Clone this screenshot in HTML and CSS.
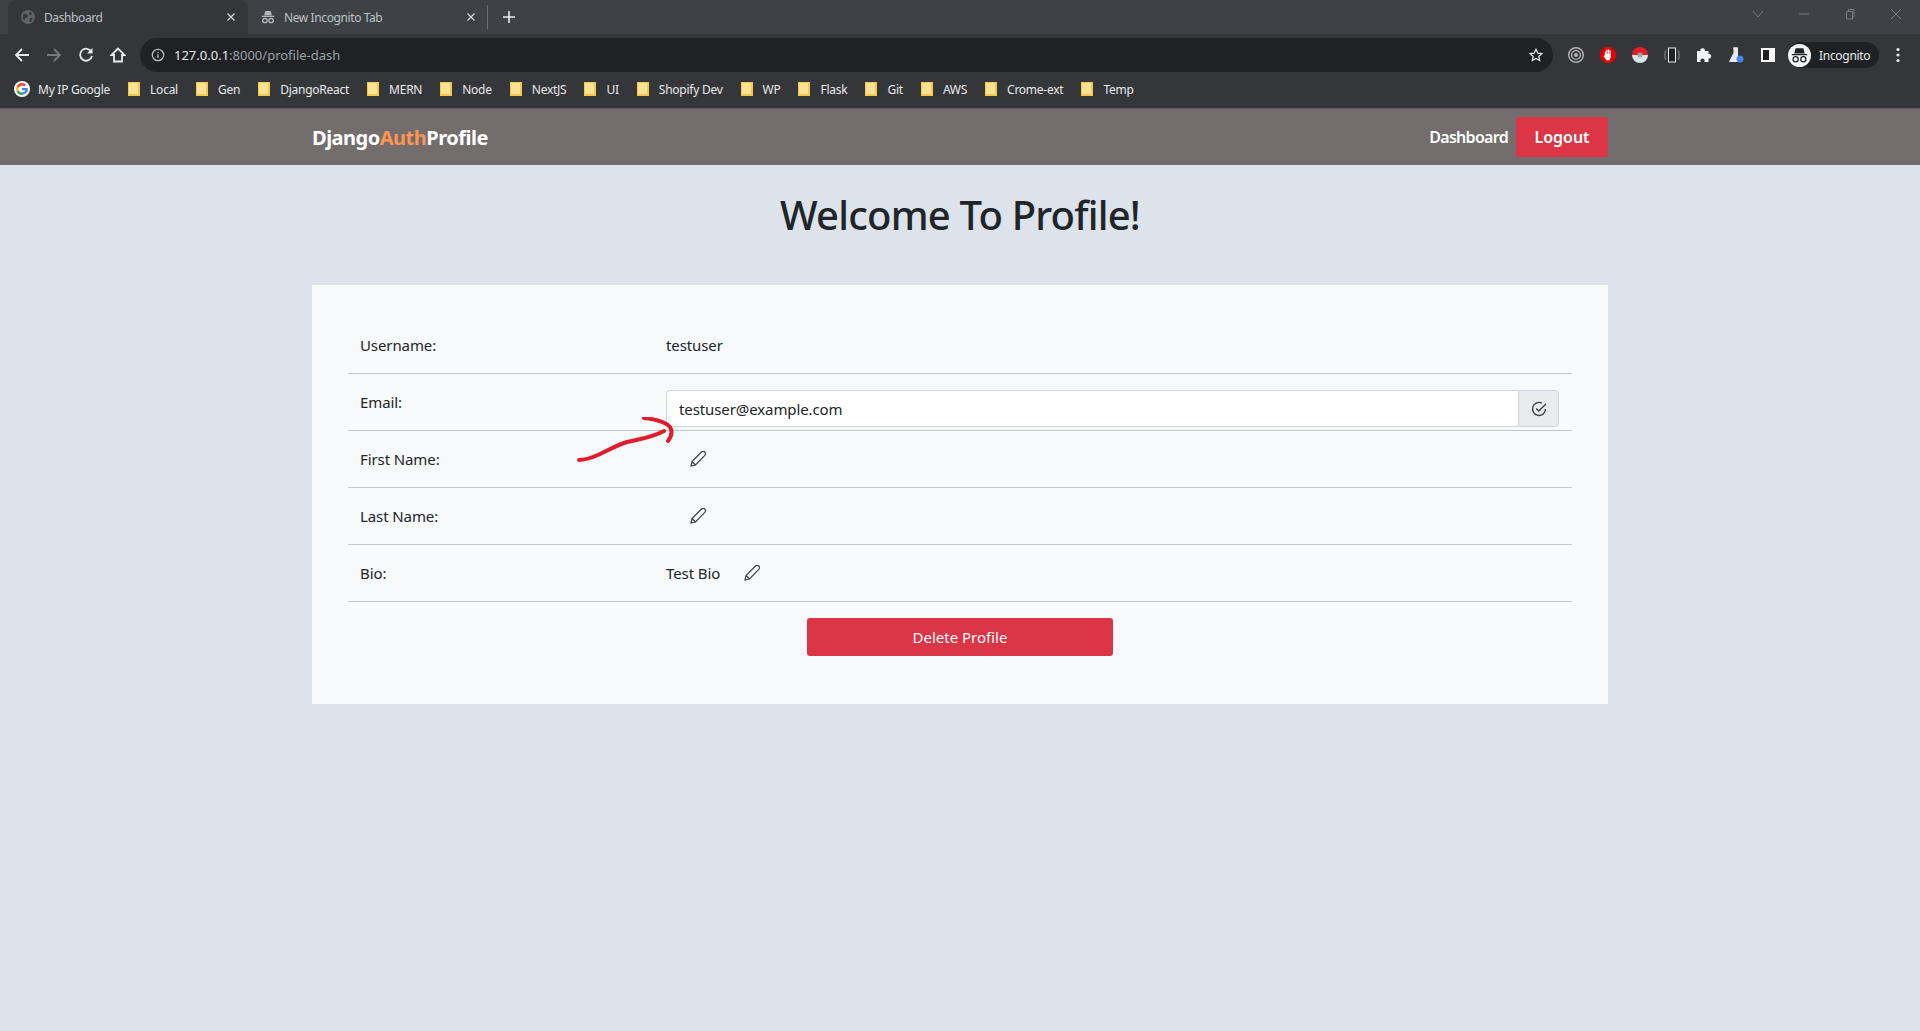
FILE: index.html
```html
<!DOCTYPE html>
<html lang="en">
<head>
    <meta charset="UTF-8">
    <title>Dashboard</title>
    <link rel="stylesheet" href="styles.css">
</head>
<body>
    <div class="chrome">
        <div class="tabstrip">
            <div class="tab tab-active">
                <svg class="tab-icon" viewBox="0 0 16 16"><circle cx="8" cy="8" r="8" fill="#5f6368"/><path d="M3 4l4 1 1 3-3 1-1 3-2-3zM10 2l3 2-2 2-2-1zM10 9l3 0-1 4-2 1z" fill="#35363a"/></svg>
                <span class="tab-title">Dashboard</span>
                <svg class="tab-close" viewBox="0 0 8 8"><path d="M.5.5l7 7M7.500.5l-7 7" stroke="#d5d7da" stroke-width="1.200"/></svg>
            </div>
            <div class="tab">
                <svg class="tab-icon" viewBox="0 0 16 16"><path d="M5 1h6l1.500 5h-9zM1 6.500h14V8H1z" fill="#b4b8bc"/><circle cx="4.500" cy="12" r="2.500" fill="none" stroke="#b4b8bc" stroke-width="1.500"/><circle cx="11.500" cy="12" r="2.500" fill="none" stroke="#b4b8bc" stroke-width="1.500"/></svg>
                <span class="tab-title">New Incognito Tab</span>
                <svg class="tab-close" viewBox="0 0 8 8"><path d="M.5.5l7 7M7.500.5l-7 7" stroke="#d5d7da" stroke-width="1.200"/></svg>
            </div>
            <div class="tab-sep"></div>
            <svg class="new-tab" viewBox="0 0 12 12"><path d="M6 0v12M0 6h12" stroke="#e8eaed" stroke-width="1.600"/></svg>
            <div class="window-btns">
                <svg viewBox="0 0 12 12"><path d="M1 3l5 6 5-6" fill="none" stroke="#777b80"/></svg>
                <svg viewBox="0 0 12 12"><path d="M1 6h10" stroke="#777b80"/></svg>
                <svg viewBox="0 0 12 12"><path d="M2.500 3.500h6v7.500h-6zM4.500 3.500v-2h5.500v7.500h-1.500" fill="none" stroke="#777b80"/></svg>
                <svg viewBox="0 0 12 12"><path d="M1 1l10 10M11 1l-10 10" stroke="#777b80"/></svg>
            </div>
        </div>
        <div class="toolbar">
            <div class="nav-btns">
                <svg viewBox="0 0 16 16"><path d="M15 8H2M8 2L2 8l6 6" fill="none" stroke="#e8eaed" stroke-width="1.800"/></svg>
                <svg viewBox="0 0 16 16"><path d="M1 8h13M8 2l6 6-6 6" fill="none" stroke="#77797d" stroke-width="1.800"/></svg>
                <svg viewBox="0 0 16 16"><path d="M13.500 5A6 6 0 1 0 14 9" fill="none" stroke="#e8eaed" stroke-width="1.800"/><path d="M14.500 1v5.500H9z" fill="#e8eaed"/></svg>
                <svg viewBox="0 0 16 16"><path d="M8 1.500L1.500 8H4v6.500h8V8h2.500z" fill="none" stroke="#e8eaed" stroke-width="1.800"/></svg>
            </div>
            <div class="omnibox">
                <svg class="info-icon" viewBox="0 0 16 16"><circle cx="8" cy="8" r="6.500" fill="none" stroke="#bdc1c6" stroke-width="1.400"/><path d="M8 7v4.500M8 4.500v1.300" stroke="#bdc1c6" stroke-width="1.400"/></svg>
                <span class="url"><span class="url-host">127.0.0.1</span>:8000/profile-dash</span>
                <svg class="star-icon" viewBox="0 0 16 16"><path d="M8 1.500l2 4.400 4.700.5-3.500 3.200 1 4.700L8 11.900l-4.200 2.400 1-4.700-3.500-3.200 4.700-.5z" fill="none" stroke="#dadce0" stroke-width="1.500"/></svg>
            </div>
            <div class="extensions">
                <svg viewBox="0 0 16 16"><circle cx="8" cy="8" r="7.300" fill="none" stroke="#b5b5b5" stroke-width="1.400"/><circle cx="8" cy="8" r="4.400" fill="none" stroke="#b5b5b5" stroke-width="1.400"/><circle cx="8" cy="8" r="2" fill="#b5b5b5"/></svg>
                <svg viewBox="0 0 16 16"><path d="M5 0h6l5 5v6l-5 5H5l-5-5V5z" fill="#e60000"/><path d="M4.800 8V4.500h1.100V7h.4V2.800h1.200V7h.4V2.500h1.200V7h.4V3.200h1.200V10l-1 3.200H6.500L3.500 9.300l.8-.8z" fill="#fff"/></svg>
                <svg viewBox="0 0 16 16"><path d="M0 8a8 8 0 0 1 16 0z" fill="#e41e26"/><path d="M0 8a8 8 0 0 0 16 0z" fill="#d8e4e8"/><circle cx="8" cy="8" r="2.500" fill="#9aa5a8"/></svg>
                <svg viewBox="0 0 16 16"><rect x="4.500" y="1" width="7" height="14" fill="#202124" stroke="#e8eaed"/><path d="M2.500 4H1v8h1.500M13.500 4H15v8h-1.500" fill="none" stroke="#80848a"/></svg>
                <svg viewBox="0 0 16 16"><path d="M1 4h3.500a2.200 2.200 0 1 1 4.300 0h3.700v3.200a2.200 2.200 0 1 1 0 4.300V15H8.300a2.200 2.200 0 1 0-3.600 0H1z" fill="#f1f3f4"/></svg>
                <svg viewBox="0 0 16 16"><path d="M5 1h5M6 1v5l-4.500 8.500h8L9.500 6V1z" fill="#e8eaed" stroke="#e8eaed"/><circle cx="12" cy="12" r="3.500" fill="#4285f4"/></svg>
                <svg viewBox="0 0 16 16"><path d="M1 1h14v14H1z" fill="#fff"/><path d="M3 3h6v10H3z" fill="#202124"/></svg>
            </div>
            <div class="profile-pill">
                <svg viewBox="0 0 24 24"><circle cx="12" cy="12" r="12" fill="#f1f3f4"/><path d="M8 4.500h8l1.500 5.500h-11zM4 10.500h16v1.300H4z" fill="#202124"/><circle cx="8" cy="16" r="2.700" fill="none" stroke="#202124" stroke-width="1.300"/><circle cx="16" cy="16" r="2.700" fill="none" stroke="#202124" stroke-width="1.300"/></svg>
                <span>Incognito</span>
            </div>
            <svg class="menu-dots" viewBox="0 0 4 16"><circle cx="2" cy="2.500" r="1.600" fill="#e8eaed"/><circle cx="2" cy="8" r="1.600" fill="#e8eaed"/><circle cx="2" cy="13.500" r="1.600" fill="#e8eaed"/></svg>
        </div>
        <div class="bookmarks">
            <a class="bookmark">
                <svg class="g-logo" viewBox="0 0 16 16"><circle cx="8" cy="8" r="8" fill="#fff"/><path d="M8 7v2.200h3.300a3.400 3.400 0 0 1-3.300 2.300V14a6 6 0 0 0 5.800-7z" fill="#4285f4"/><path d="M8 11.500a3.500 3.500 0 0 1-3.300-2.300l-2 1.500A6 6 0 0 0 8 14z" fill="#34a853"/><path d="M4.700 9.200a3.500 3.500 0 0 1 0-2.400l-2-1.500a6 6 0 0 0 0 5.400z" fill="#fbbc05"/><path d="M4.700 6.800A3.500 3.500 0 0 1 10.300 5.400l1.800-1.800A6 6 0 0 0 2.700 5.300z" fill="#ea4335"/></svg>
                My IP Google
            </a>
            <a class="bookmark"><span class="folder"></span>Local</a>
            <a class="bookmark"><span class="folder"></span>Gen</a>
            <a class="bookmark"><span class="folder"></span>DjangoReact</a>
            <a class="bookmark"><span class="folder"></span>MERN</a>
            <a class="bookmark"><span class="folder"></span>Node</a>
            <a class="bookmark"><span class="folder"></span>NextJS</a>
            <a class="bookmark"><span class="folder"></span>UI</a>
            <a class="bookmark"><span class="folder"></span>Shopify Dev</a>
            <a class="bookmark"><span class="folder"></span>WP</a>
            <a class="bookmark"><span class="folder"></span>Flask</a>
            <a class="bookmark"><span class="folder"></span>Git</a>
            <a class="bookmark"><span class="folder"></span>AWS</a>
            <a class="bookmark"><span class="folder"></span>Crome-ext</a>
            <a class="bookmark"><span class="folder"></span>Temp</a>
        </div>
    </div>

    <nav class="navbar">
        <a class="brand">Django<span class="brand-accent">Auth</span>Profile</a>
        <div class="nav-links">
            <a class="nav-link">Dashboard</a>
            <a class="btn-logout">Logout</a>
        </div>
    </nav>

    <main class="container">
        <h1 class="page-title">Welcome To Profile!</h1>
        <section class="profile-card">
            <div class="profile-row">
                <div class="profile-label">Username:</div>
                <div class="profile-value">testuser</div>
            </div>
            <div class="profile-row">
                <div class="profile-label">Email:</div>
                <div class="input-group">
                    <input class="email-input" type="text" value="testuser@example.com">
                    <span class="input-addon">
                        <svg class="icon" viewBox="0 0 16 16"><path d="M14.500 8A6.500 6.500 0 1 1 11 2.200" fill="none" stroke="currentColor" stroke-width="1.300"/><path d="M5.200 7.500l2.500 2.500L15 3" fill="none" stroke="currentColor" stroke-width="1.300"/></svg>
                    </span>
                </div>
            </div>
            <div class="profile-row">
                <div class="profile-label">First Name:</div>
                <div class="profile-value"><button class="edit-btn"><svg class="icon" viewBox="0 0 16 16"><path d="M1 15l1-4.500L11.500 1c1-1 2.500-.8 3.300 0s1 2.300 0 3.300L5.500 14zM2 10.500l3.500 3.500" fill="none" stroke="currentColor" stroke-width="1.200"/></svg></button></div>
            </div>
            <div class="profile-row">
                <div class="profile-label">Last Name:</div>
                <div class="profile-value"><button class="edit-btn"><svg class="icon" viewBox="0 0 16 16"><path d="M1 15l1-4.500L11.500 1c1-1 2.500-.8 3.300 0s1 2.300 0 3.300L5.500 14zM2 10.500l3.500 3.500" fill="none" stroke="currentColor" stroke-width="1.200"/></svg></button></div>
            </div>
            <div class="profile-row">
                <div class="profile-label">Bio:</div>
                <div class="profile-value">Test Bio<button class="edit-btn"><svg class="icon" viewBox="0 0 16 16"><path d="M1 15l1-4.500L11.500 1c1-1 2.500-.8 3.300 0s1 2.300 0 3.300L5.500 14zM2 10.500l3.500 3.500" fill="none" stroke="currentColor" stroke-width="1.200"/></svg></button></div>
            </div>
            <div class="delete-wrap">
                <button class="btn-delete">Delete Profile</button>
            </div>
        </section>
    </main>

    <svg class="scribble" width="120" height="60" viewBox="0 0 120 60">
        <path d="M2 43C8 43 14 41 21 38C32 33 40 28 50 25C62 22 74 21 87 14M67 1C76 2 88 4 93 10C96 15 94 20 91 24" fill="none" stroke="#e21c2a" stroke-width="4" stroke-linecap="round"/>
    </svg>
</body>
</html>
```

FILE: styles.css
```css
* {
    box-sizing: border-box;
}
body {
    margin: 0;
    min-height: 1031px;
    font-family: "Noto Sans", "Open Sans", sans-serif;
    color: #212529;
    background-color: #dce3ea;
}

/* browser frame */
.chrome {
    color: #e8eaed;
    background-color: #35363a;
}
.tabstrip {
    display: flex;
    align-items: center;
    height: 34px;
    padding-left: 8px;
    background-color: #3e4145;
}
.tab {
    display: flex;
    align-items: center;
    width: 240px;
    height: 34px;
    padding: 0 13px;
    font-size: 12px;
    letter-spacing: -0.4px;
    color: #bdc1c6;
}
.tab-active {
    border-radius: 8px 8px 0 0;
    background-color: #35363a;
}
.tab-icon {
    width: 14px;
    height: 14px;
    margin-right: 9px;
}
.tab-title {
    flex: 1;
}
.tab-close {
    width: 8px;
    height: 8px;
}
.tab-sep {
    width: 1px;
    height: 24px;
    margin-left: -1px;
    background-color: #6b6e72;
}
.new-tab {
    width: 12px;
    height: 12px;
    margin-left: 15px;
}
.window-btns {
    display: flex;
    gap: 34px;
    margin-left: auto;
    padding-right: 18px;
    padding-bottom: 6px;
}
.window-btns svg {
    width: 12px;
    height: 12px;
}
.toolbar {
    display: flex;
    align-items: center;
    height: 38px;
    padding-top: 4px;
}
.nav-btns {
    display: flex;
    gap: 16px;
    padding-left: 14px;
}
.nav-btns svg {
    width: 16px;
    height: 16px;
}
.omnibox {
    display: flex;
    align-items: center;
    width: 1413px;
    height: 34px;
    margin-left: 14px;
    padding: 0 10px 0 11px;
    border-radius: 17px;
    background-color: #202124;
    font-size: 13px;
}
.info-icon {
    width: 14px;
    height: 14px;
    margin-right: 9px;
}
.url {
    flex: 1;
    color: #9aa0a6;
}
.url-host {
    color: #e8eaed;
}
.star-icon {
    width: 14px;
    height: 14px;
}
.extensions {
    display: flex;
    gap: 16px;
    margin-left: 15px;
}
.extensions svg {
    width: 16px;
    height: 16px;
}
.profile-pill {
    display: flex;
    align-items: center;
    width: 91px;
    height: 26px;
    margin-left: 12px;
    border-radius: 13px;
    background-color: #202124;
    font-size: 12px;
    letter-spacing: -0.3px;
}
.profile-pill svg {
    width: 23px;
    height: 23px;
    margin-right: 8px;
}
.menu-dots {
    width: 4px;
    height: 16px;
    margin-left: 17px;
}
.bookmarks {
    display: flex;
    align-items: center;
    gap: 18px;
    height: 37px;
    padding: 0 0 2px 14px;
    border-bottom: 1px solid #5a5a5c;
    font-size: 12px;
    letter-spacing: -0.25px;
}
.bookmark {
    display: flex;
    align-items: center;
    gap: 10px;
}
.g-logo {
    width: 16px;
    height: 16px;
    margin-right: -2px;
}
.folder {
    width: 12px;
    height: 14px;
    border: 1px solid #f2c94c;
    border-right-width: 2px;
    border-bottom-width: 2px;
    background-color: #fde293;
}

/* site navbar */
.navbar {
    display: flex;
    align-items: center;
    justify-content: space-between;
    height: 56px;
    padding: 0 312px;
    background-color: #736d6d;
}
.brand {
    font-size: 20px;
    font-weight: 700;
    letter-spacing: -0.5px;
    color: #fff;
}
.brand-accent {
    color: #fd9650;
}
.nav-links {
    display: flex;
    align-items: center;
    gap: 8px;
}
.nav-link {
    font-size: 16px;
    font-weight: 600;
    letter-spacing: -0.7px;
    color: #fff;
}
.btn-logout {
    display: flex;
    align-items: center;
    justify-content: center;
    width: 92px;
    height: 40px;
    border-radius: 2px;
    background-color: #dc3545;
    font-weight: 600;
    color: #fff;
}

/* profile */
.container {
    width: 1296px;
    margin: 0 auto;
}
.page-title {
    margin: 0;
    padding: 22px 0 42px;
    font-size: 40px;
    font-weight: 500;
    line-height: 56px;
    letter-spacing: -0.8px;
    text-align: center;
}
.profile-card {
    height: 419px;
    padding: 32px 36px;
    background-color: #f8f9fa;
}
.profile-row {
    display: grid;
    grid-template-columns: 306px 1fr;
    height: 57px;
    padding: 16px 13px 0 12px;
    border-bottom: 1px solid #c4c6c9;
    font-size: 15px;
    line-height: 24px;
    letter-spacing: -0.1px;
}
.profile-value {
    display: flex;
    align-items: center;
    height: 24px;
}
.edit-btn {
    display: flex;
    padding: 0;
    margin-left: 24px;
    border: 0;
    background: none;
    color: #33373b;
}
.icon {
    width: 16px;
    height: 16px;
    color: #3c4045;
}
.input-group {
    display: flex;
    height: 37px;
}
.email-input {
    flex: 1;
    padding: 0 12px;
    border: 1px solid #ced4da;
    border-right: 0;
    border-radius: 4px 0 0 4px;
    background-color: #fff;
    font-family: inherit;
    font-size: 15px;
    letter-spacing: -0.1px;
    color: #212529;
}
.input-addon {
    display: flex;
    align-items: center;
    justify-content: center;
    width: 41px;
    border: 1px solid #ced4da;
    border-radius: 0 4px 4px 0;
    background-color: #e9ecef;
}
.delete-wrap {
    display: flex;
    justify-content: center;
    padding-top: 16px;
}
.btn-delete {
    width: 306px;
    height: 38px;
    border: 0;
    border-radius: 3px;
    background-color: #dc3545;
    font-family: inherit;
    font-size: 15px;
    color: #fff;
}

/* hand drawn arrow on top of the screenshot */
.scribble {
    position: absolute;
    left: 577px;
    top: 417px;
}
```
